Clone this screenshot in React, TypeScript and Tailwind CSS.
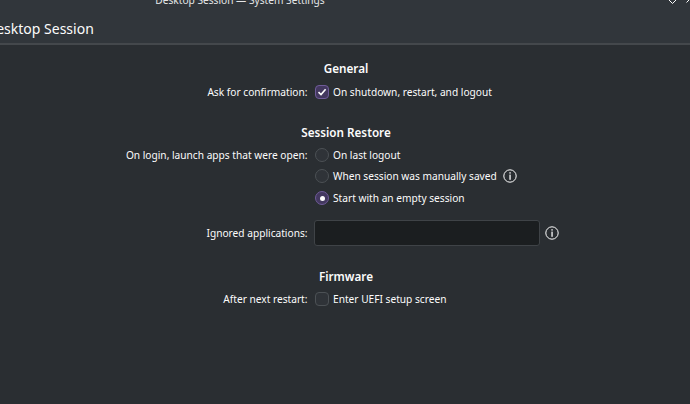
import React from "react";

const Info = () => (
  <svg width="16" height="16" viewBox="0 0 16 16" fill="none" className="block">
    <circle cx="8" cy="8" r="6.2" stroke="#fcfcfc" strokeWidth="1" />
    <rect x="7.4" y="4.2" width="1.3" height="1.4" fill="#fcfcfc" />
    <rect x="7.4" y="6.6" width="1.3" height="5.2" fill="#fcfcfc" />
  </svg>
);

const Check = ({ on }: { on?: boolean }) => (
  <span className={`flex h-[14px] w-[14px] items-center justify-center rounded-[4px] border ${on ? "border-[#6f5b99] bg-[#43385f]" : "border-[#4c5155] bg-[#2f3338]"}`}>
    {on && (
      <svg width="10" height="10" viewBox="0 0 10 10" fill="none">
        <path d="M1.5 5.2 L4 7.6 L8.6 2.2" stroke="#fcfcfc" strokeWidth="1.6" />
      </svg>
    )}
  </span>
);

const Radio = ({ on }: { on?: boolean }) => (
  <span className={`flex h-[14px] w-[14px] items-center justify-center rounded-full border ${on ? "border-[#6f5b99] bg-[#43385f]" : "border-[#4c5155] bg-[#2f3338]"}`}>
    {on && <span className="h-[5px] w-[5px] rounded-full bg-[#fcfcfc]" />}
  </span>
);

const Row = ({ label, children, className = "" }: { label?: string; children: React.ReactNode; className?: string }) => (
  <div className={`flex items-center ${className}`}>
    <div className="w-[307.5px] shrink-0 text-right">{label}</div>
    <div className="ml-[7.5px] flex items-center">{children}</div>
  </div>
);

const Heading = ({ children, className = "" }: { children: React.ReactNode; className?: string }) => (
  <div className={`w-[692px] text-center text-[11.7px] font-semibold leading-[16px] text-[#fcfcfc] ${className}`}>{children}</div>
);

export default function App() {
  return (
    <div className="relative flex h-[404px] w-[690px] flex-col overflow-hidden bg-[#2a2e32] text-[10.16px] leading-[14px] text-[#fcfcfc]" style={{ fontFamily: '"Noto Sans", sans-serif' }}>
      <div className="h-[45px] shrink-0 border-b-2 border-[#44484c] bg-[#31363b]">
        <div className="mt-[-7px] flex h-[14px] w-[480px] justify-center">
          <span className="whitespace-nowrap text-[#e5e6e7]">Desktop Session — System Settings</span>
        </div>
        <div className="ml-[-14px] mt-[13px] whitespace-nowrap text-[14px] leading-[18px]">Desktop Session</div>
      </div>
      <svg width="24" height="6" viewBox="0 0 24 6" className="absolute left-[667px] top-0" fill="none">
        <path d="M2 0 L5.5 3.5 L9 0" stroke="#fcfcfc" strokeWidth="1" />
        <path d="M23 -1 L19.5 2.5" stroke="#fcfcfc" strokeWidth="1" />
      </svg>
      <Heading className="mt-[15px]">General</Heading>
      <Row label="Ask for confirmation:" className="mt-[8px] h-[16px]">
        <Check on />
        <span className="ml-[4px]">On shutdown, restart, and logout</span>
      </Row>
      <Heading className="mt-[24px]">Session Restore</Heading>
      <Row label="On login, launch apps that were open:" className="mt-[7px] h-[16px]">
        <Radio />
        <span className="ml-[4px]">On last logout</span>
      </Row>
      <Row className="mt-[5px] h-[16px]">
        <Radio />
        <span className="ml-[4px]">When session was manually saved</span>
        <span className="ml-[5px]"><Info /></span>
      </Row>
      <Row className="mt-[6px] h-[16px]">
        <Radio on />
        <span className="ml-[4px]">Start with an empty session</span>
      </Row>
      <Row label="Ignored applications:" className="mt-[14px]">
        <div className="ml-[-1px] h-[26px] w-[226px] rounded-[3px] border border-[#3f4347] bg-[#1b1e20]" />
        <span className="ml-[4px]"><Info /></span>
      </Row>
      <Heading className="mt-[22px]">Firmware</Heading>
      <Row label="After next restart:" className="mt-[7px] h-[16px]">
        <Check />
        <span className="ml-[4px]">Enter UEFI setup screen</span>
      </Row>
    </div>
  );
}
